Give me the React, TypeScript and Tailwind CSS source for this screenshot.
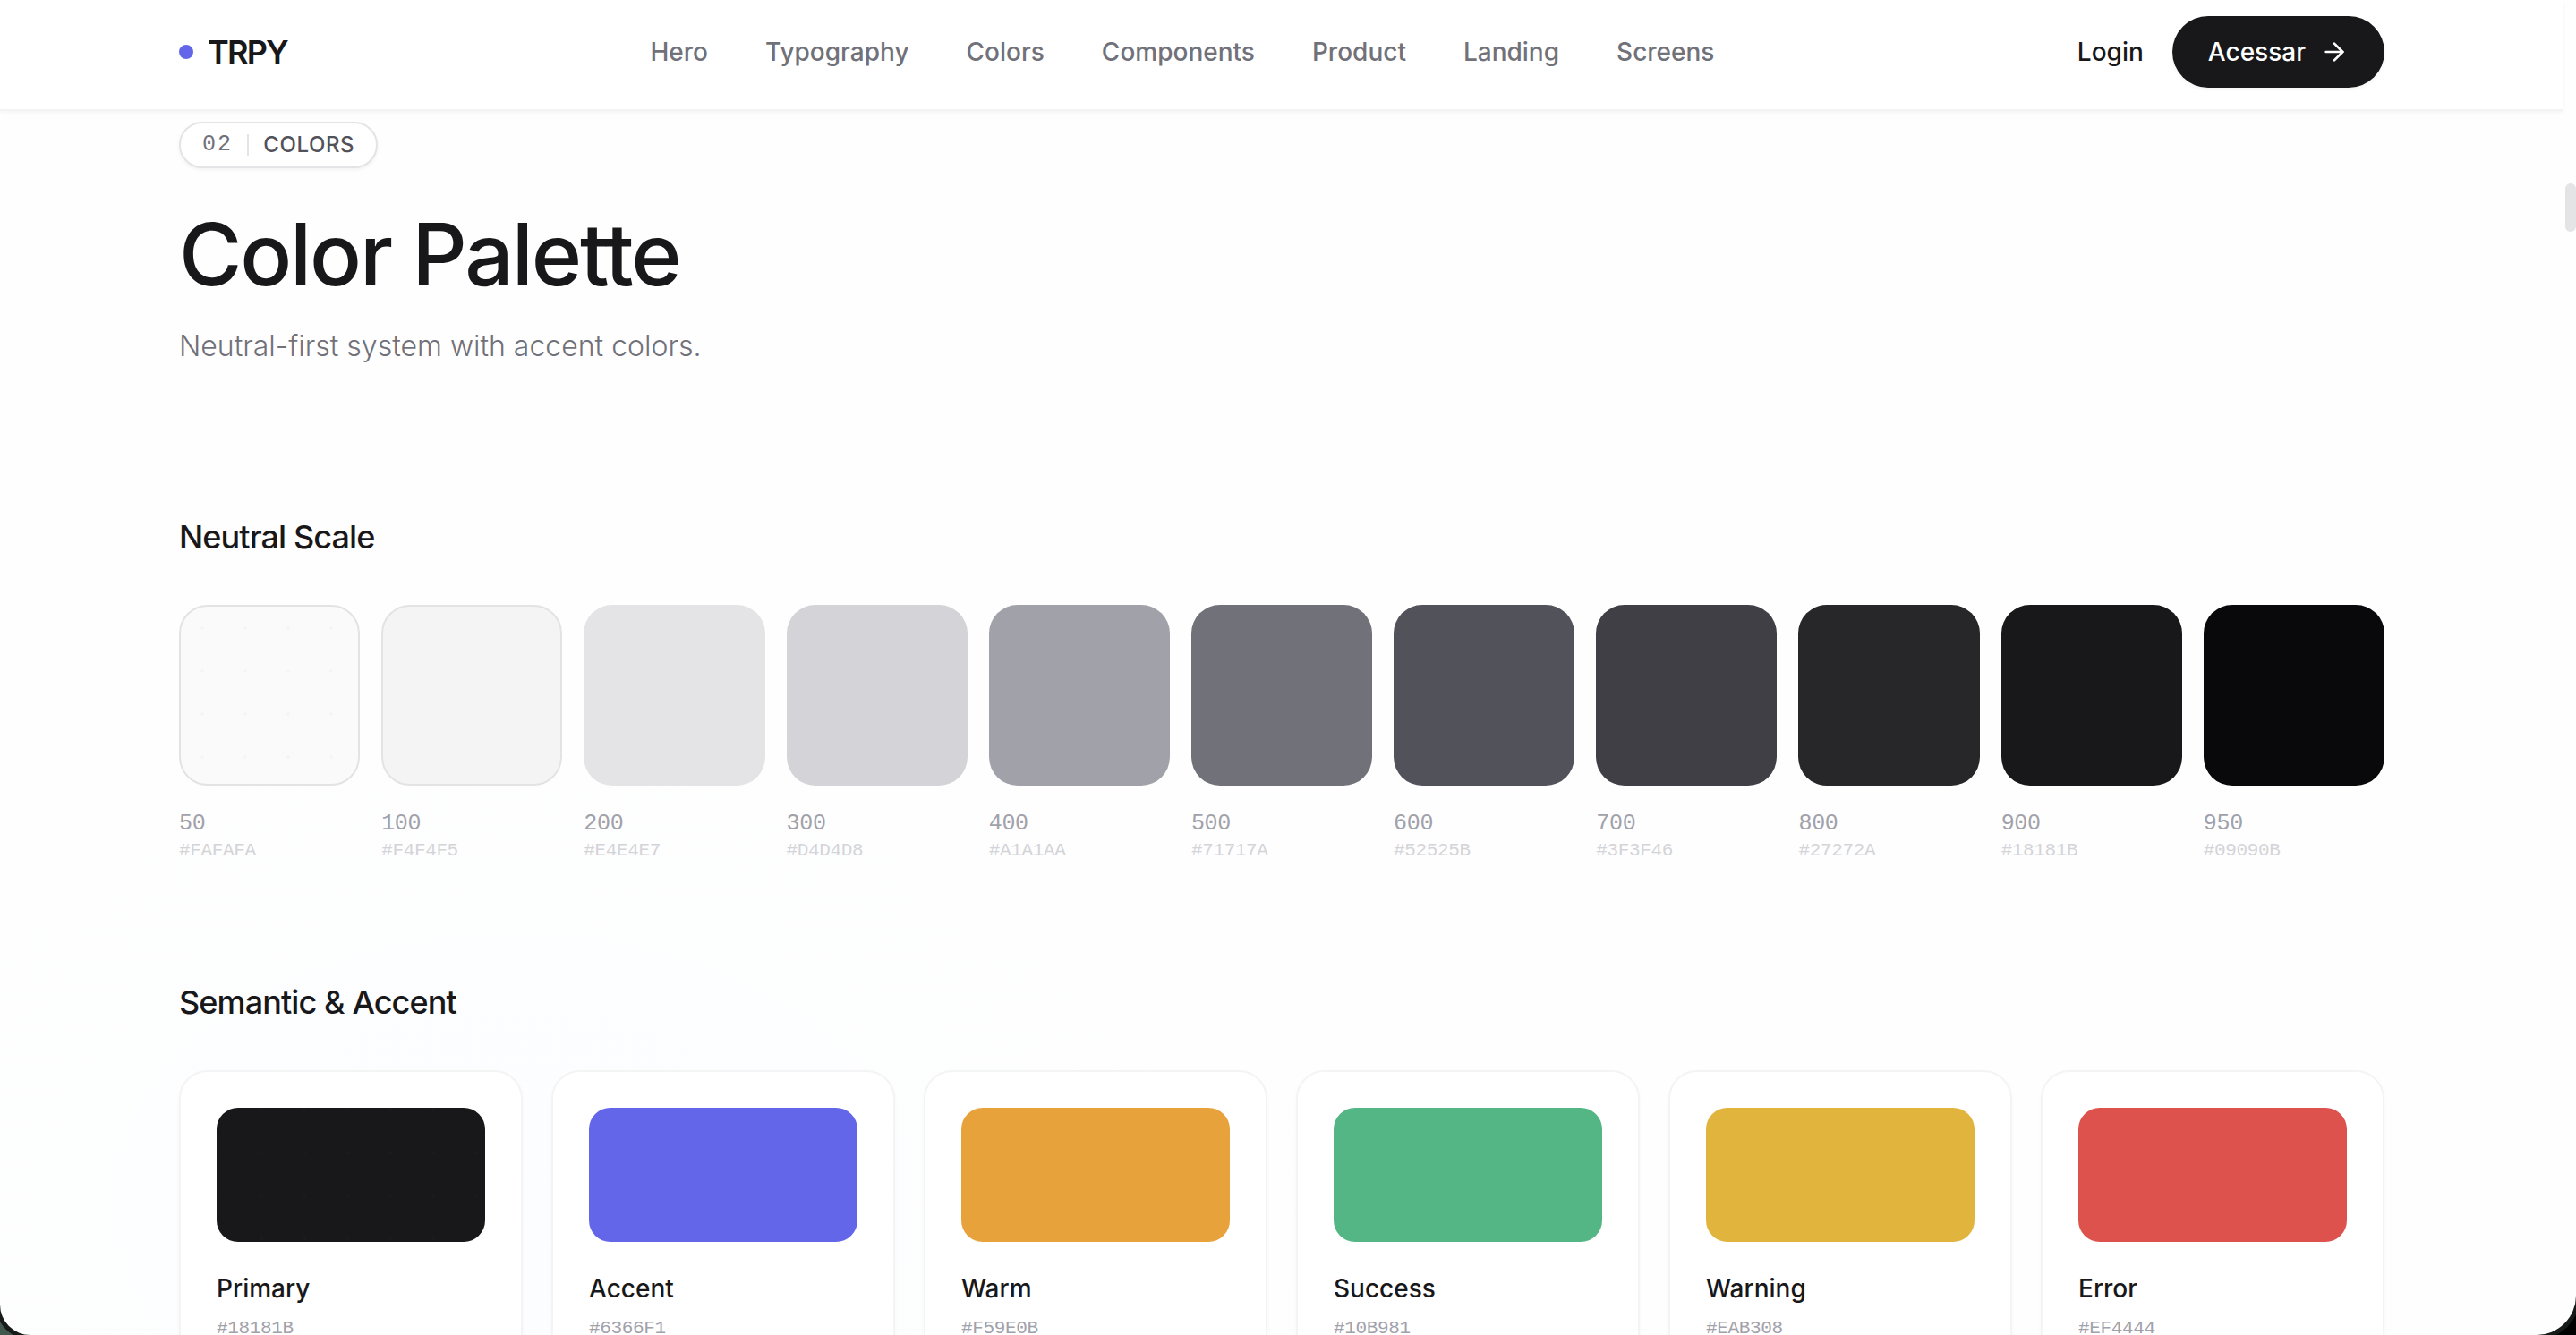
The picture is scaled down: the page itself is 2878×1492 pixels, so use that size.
import { ArrowRight } from "lucide-react"

const navItems = ["Hero", "Typography", "Colors", "Components", "Product", "Landing", "Screens"]

const neutrals = [
  { step: "50", hex: "#FAFAFA", swatch: "bg-[#fafafa] border-2 border-[#e3e3e4] bg-[radial-gradient(circle,#f5f5f5_1.5px,transparent_2px)] bg-[length:48px_48px]" },
  { step: "100", hex: "#F4F4F5", swatch: "bg-[#f4f4f4] border-2 border-[#e3e3e4]" },
  { step: "200", hex: "#E4E4E7", swatch: "bg-[#e4e4e6]" },
  { step: "300", hex: "#D4D4D8", swatch: "bg-[#d4d4d8]" },
  { step: "400", hex: "#A1A1AA", swatch: "bg-[#a1a1a9]" },
  { step: "500", hex: "#71717A", swatch: "bg-[#717179]" },
  { step: "600", hex: "#52525B", swatch: "bg-[#52525a]" },
  { step: "700", hex: "#3F3F46", swatch: "bg-[#3f3f45]" },
  { step: "800", hex: "#27272A", swatch: "bg-[#27272a]" },
  { step: "900", hex: "#18181B", swatch: "bg-[#18181a]" },
  { step: "950", hex: "#09090B", swatch: "bg-[#09090b]" },
]

const accents = [
  { name: "Primary", hex: "#18181B", swatch: "bg-[#18181a] bg-[radial-gradient(circle_at_2px_2px,#1b1b1d_1.5px,transparent_2px)] bg-[length:48px_48px]" },
  { name: "Accent", hex: "#6366F1", swatch: "bg-[#6366e8]" },
  { name: "Warm", hex: "#F59E0B", swatch: "bg-[#e8a23b]" },
  { name: "Success", hex: "#10B981", swatch: "bg-[#55b685]" },
  { name: "Warning", hex: "#EAB308", swatch: "bg-[#e1b53d]" },
  { name: "Error", hex: "#EF4444", swatch: "bg-[#dd524c]" },
]

function Header() {
  return (
    <header className="relative z-10 mr-[14px] h-[124px] border-b-2 border-[#f3f3f4] bg-white pt-[18px] shadow-[0_2px_4px_rgba(0,0,0,0.04)]">
      <div className="mx-auto flex h-20 w-[2464px] items-center justify-between">
        <div className="flex items-center gap-4">
          <span className="size-4 rounded-full bg-[#6366e8]" />
          <span className="text-[36px] font-semibold tracking-[-0.05em]">TRPY</span>
        </div>
        <nav className="flex gap-16 text-[28px] font-medium text-[#71717a]">
          {navItems.map((item) => (
            <a key={item}>{item}</a>
          ))}
        </nav>
        <div className="flex items-center gap-8">
          <a className="text-[28px] font-medium">Login</a>
          <button className="flex h-20 items-center gap-4 rounded-full bg-[#18181a] px-10 text-[28px] font-medium text-white shadow-[0_2px_4px_rgba(0,0,0,0.05)]">
            Acessar
            <ArrowRight size={32} />
          </button>
        </div>
      </div>
    </header>
  )
}

function SectionBadge({ index, label }: { index: string; label: string }) {
  return (
    <div className="flex h-[52px] w-fit items-center gap-4 rounded-full border-2 border-[#e4e4e7] bg-white px-6 text-[24px] shadow-[0_2px_4px_rgba(0,0,0,0.05)]">
      <span className="font-['Liberation_Mono',monospace] text-[25px] tracking-[2.1px] text-[#71717a]">{index}</span>
      <span className="h-6 w-0.5 bg-[#e4e4e7]" />
      <span className="font-medium tracking-[0.025em] text-[#52525b]">{label}</span>
    </div>
  )
}

function NeutralScale() {
  return (
    <section className="mt-[161px]">
      <h3 className="text-[36px] leading-[52px] font-medium tracking-[-0.025em]">Neutral Scale</h3>
      <div className="mt-[50px] grid grid-cols-11 gap-6">
        {neutrals.map((n) => (
          <div key={n.step} className="font-['Liberation_Mono',monospace]">
            <div className={`aspect-square rounded-[32px] ${n.swatch}`} />
            <p className="mt-7 text-[25px] leading-[30px] tracking-[-0.3px] text-[#a1a1aa]">{n.step}</p>
            <p className="text-[21px] leading-[30px] tracking-[-0.36px] text-[#d4d4d8]">{n.hex}</p>
          </div>
        ))}
      </div>
    </section>
  )
}

function SemanticAccent() {
  return (
    <section className="mt-[128px]">
      <h3 className="text-[36px] leading-[52px] font-medium tracking-[-0.025em]">Semantic &amp; Accent</h3>
      <div className="mt-[50px] grid grid-cols-6 gap-8">
        {accents.map((a) => (
          <div key={a.name} className="h-[400px] rounded-[32px] border-2 border-[#f4f4f5] bg-white p-10 shadow-[0_2px_4px_rgba(0,0,0,0.03)]">
            <div className={`aspect-2/1 rounded-3xl ${a.swatch}`} />
            <p className="mt-8 text-[28px] leading-10 font-medium">{a.name}</p>
            <p className="mt-2.5 font-['Liberation_Mono',monospace] text-[21px] leading-[30px] tracking-[-0.36px] text-[#a1a1aa]">{a.hex}</p>
          </div>
        ))}
      </div>
    </section>
  )
}

export default function App() {
  return (
    <div className="h-[1492px] w-[2878px] overflow-hidden bg-linear-to-r from-[#41594f] to-black to-20%">
      <div className="relative h-full overflow-hidden rounded-br-[44px] rounded-bl-[34px] bg-[#fefefe] bg-[radial-gradient(ellipse_900px_600px_at_20%_90%,#fcfdff,transparent)] font-['Inter',sans-serif] text-[#18181b] shadow-[0_0_0_5px_#161a19]">
        <Header />
        <main className="mr-[14px]">
          <div className="mx-auto w-[2464px] pt-3">
            <SectionBadge index="02" label="COLORS" />
            <h2 className="mt-12 text-[96px] leading-[96px] font-medium tracking-[-0.0225em]">Color Palette</h2>
            <p className="mt-[29px] text-[32px] leading-[52px] font-light text-[#71717a]">Neutral-first system with accent colors.</p>
            <NeutralScale />
            <SemanticAccent />
          </div>
        </main>
        {/* scrollbar thumb */}
        <div className="absolute top-[205px] right-0 h-[54px] w-3 rounded-full bg-[#e4e4e6]" />
      </div>
    </div>
  )
}
